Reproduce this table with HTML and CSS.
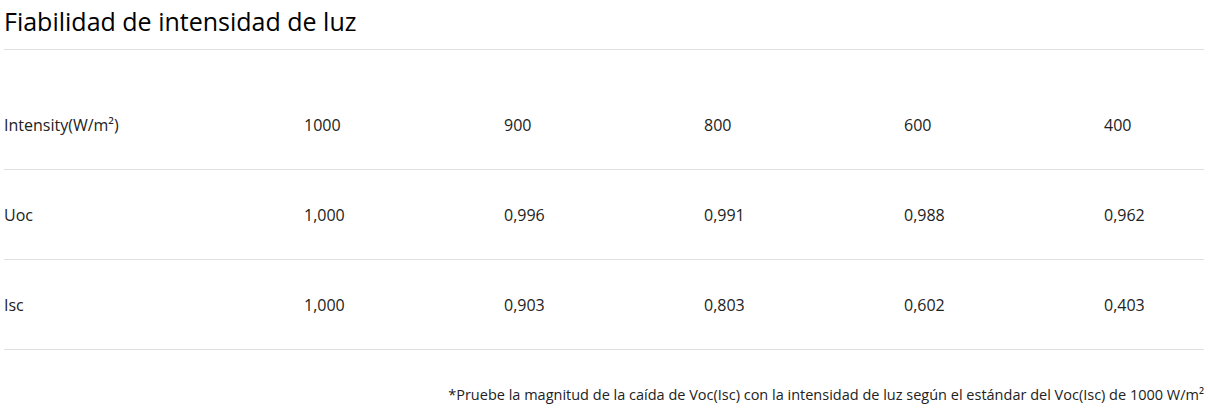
FILE: index.html
```html
<!DOCTYPE html>
<html lang="es">
<head>
<meta charset="utf-8">
<title>Fiabilidad de intensidad de luz</title>
<link rel="stylesheet" href="styles.css">
</head>
<body>
<div class="wrap">
  <h2 class="title">Fiabilidad de intensidad de luz</h2>
  <table class="data">
    <colgroup><col class="c-label"><col class="c-val"><col class="c-val"><col class="c-val"><col class="c-val"><col></colgroup>
    <tr><td>Intensity(W/m²)</td><td>1000</td><td>900</td><td>800</td><td>600</td><td>400</td></tr>
    <tr><td>Uoc</td><td>1,000</td><td>0,996</td><td>0,991</td><td>0,988</td><td>0,962</td></tr>
    <tr><td>Isc</td><td>1,000</td><td>0,903</td><td>0,803</td><td>0,602</td><td>0,403</td></tr>
  </table>
  <p class="note">*Pruebe la magnitud de la caída de Voc(Isc) con la intensidad de luz según el estándar del Voc(Isc) de 1000 W/m²</p>
</div>
</body>
</html>
```

FILE: styles.css
```css
html, body {
  margin: 0;
  padding: 0;
  background: #fff;
}
body {
  font-family: "Open Sans", "Noto Sans", sans-serif;
  color: #222;
}
.wrap {
  width: 1200px;
  margin-left: 4px;
}
.title {
  margin: 0;
  font-size: 25px;
  font-weight: 400;
  color: #000;
  line-height: 42px;
  height: 42px;
  padding-bottom: 7px;
  border-bottom: 1px solid #e0e0e0;
  white-space: nowrap;
}
.data {
  margin-top: 30px;
  width: 1200px;
  border-collapse: collapse;
  table-layout: fixed;
  font-size: 16px;
}
.c-label {
  width: 300px;
}
.c-val {
  width: 200px;
}
.data td {
  height: 89px;
  padding: 0;
  border-bottom: 1px solid #e0e0e0;
  vertical-align: middle;
  white-space: nowrap;
}
.note {
  margin: 0;
  padding-top: 35px;
  text-align: right;
  font-size: 14.5px;
  color: #222;
  white-space: nowrap;
}
```
